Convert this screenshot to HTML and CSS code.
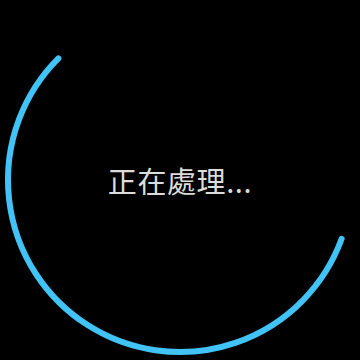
FILE: index.html
```html
<!DOCTYPE html>
<html lang="zh-Hant">
<head>
<meta charset="utf-8">
<link rel="stylesheet" href="styles.css">
</head>
<body>
<div class="stage">
  <svg class="ring" width="360" height="360" viewBox="0 0 360 360">
    <path d="M58.38 58.38 A172 172 0 1 0 341.63 238.83" fill="none" stroke="#42c3f7" stroke-width="6" stroke-linecap="round"/>
  </svg>
  <div class="label">正在處理...</div>
</div>
</body>
</html>
```
FILE: styles.css
```css
html, body {
  margin: 0;
  padding: 0;
  background: #000;
}
.stage {
  position: relative;
  width: 360px;
  height: 360px;
  display: flex;
  align-items: center;
  justify-content: center;
  background: #000;
  overflow: hidden;
}
.ring {
  position: absolute;
  left: 0;
  top: 0;
}
.label {
  position: relative;
  font-family: "Noto Sans CJK TC", "Noto Sans", sans-serif;
  font-size: 29px;
  letter-spacing: 0.6px;
  line-height: 1;
  color: #dcdcdc;
  padding-top: 1px;
}
```
